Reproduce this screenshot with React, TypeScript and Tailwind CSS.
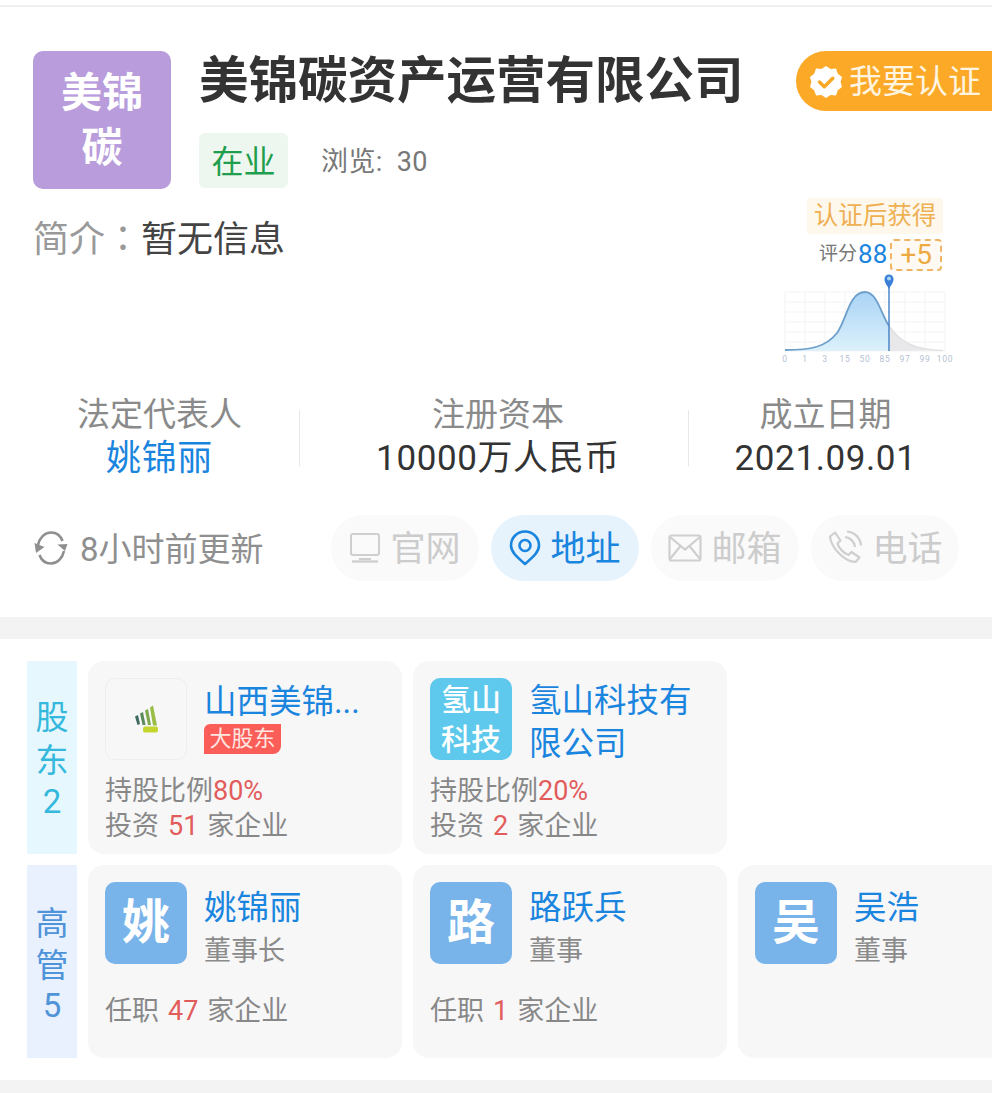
import type { ReactNode } from 'react'

function BadgeIcon() {
  return (
    <svg width="34" height="34" viewBox="0 0 34 34">
      <path d="M17 1l4.600 3 5.400-.4 1.800 5.100 4.200 3.400L31.600 17l1.400 4.900-4.200 3.400-1.800 5.100-5.400-.4L17 33l-4.600-3-5.400.4-1.800-5.100L1 21.900 2.400 17 1 12.100l4.200-3.400L7 3.600l5.400.4z" fill="#fff" />
      <path d="M10.500 17l4.800 4.800 8.500-8.600" fill="none" stroke="#f9a825" strokeWidth="3.400" strokeLinecap="round" strokeLinejoin="round" />
    </svg>
  )
}

function RefreshIcon() {
  return (
    <svg width="36" height="36" viewBox="0 0 36 36" fill="none" stroke="#8f8f8f" strokeWidth="2.600">
      <path d="M5 15C6.500 8 11.500 2.500 18 2.500c5 0 9.500 3 11.500 8.500" />
      <path d="M31 21c-1.500 7-6.500 12.500-13 12.500-5 0-9.500-3-11.500-8.500" />
      <path d="M1.500 13l10 4-8.500 6z" fill="#8f8f8f" stroke="none" />
      <path d="M34.500 14l-10 .5 7.500 6.500z" fill="#8f8f8f" stroke="none" />
    </svg>
  )
}

function LaptopIcon() {
  return (
    <svg width="32" height="32" viewBox="0 0 32 32" fill="none" stroke="#cfcfcf" strokeWidth="2">
      <rect x="2" y="2" width="28" height="21" rx="2" />
      <path d="M3 29.500h26" strokeWidth="2.400" />
      <path d="M10 27h12" strokeWidth="2" />
    </svg>
  )
}

function PinIcon() {
  return (
    <svg width="32" height="36" viewBox="0 0 32 36" fill="none" stroke="#1a85de" strokeWidth="2.600">
      <path d="M16 34C8 27 2 22 2 15.500 2 7.500 8.300 1.500 16 1.500s14 6 14 14C30 22 24 27 16 34z" strokeLinejoin="round" />
      <circle cx="16" cy="15.500" r="5.500" />
    </svg>
  )
}

function MailIcon() {
  return (
    <svg width="34" height="28" viewBox="0 0 34 28" fill="none" stroke="#cfcfcf" strokeWidth="2.200">
      <rect x="1.500" y="1.500" width="31" height="25" rx="2" />
      <path d="M2 3l15 12.500L32 3M2 25l10.500-13M32 25L21.500 12" />
    </svg>
  )
}

function PhoneIcon() {
  return (
    <svg width="36" height="36" viewBox="0 0 36 36" fill="none" stroke="#cfcfcf" strokeWidth="2.200" strokeLinejoin="round">
      <path d="M3 6.500L8 2.500l5.500 8-3 3c1 4.500 6.500 10 11 11.500l3-3 8 5.500-4 4.500C18 32 4 18 3 6.500z" />
      <path d="M18 7c5 .5 9.500 4.500 10 10M20 1.500c7.500.500 13.500 6.500 14 14" />
    </svg>
  )
}

function ScoreChart() {
  const ticks = ['0', '1', '3', '15', '50', '85', '97', '99', '100']
  return (
    <svg width="174" height="95" viewBox="0 0 174 95" className="block">
      <defs>
        <linearGradient id="curve" x1="0" y1="0" x2="0" y2="1">
          <stop offset="0" stopColor="#a9d3f5" />
          <stop offset="1" stopColor="#dcf1fb" />
        </linearGradient>
      </defs>
      <g stroke="#f3f3f3" strokeWidth="1">
        {[21, 31, 41, 51, 61, 71, 80].map((y) => (
          <path key={y} d={`M4 ${y}H164`} />
        ))}
        {[4, 24, 44, 64, 84, 104, 124, 144, 164].map((x) => (
          <path key={x} d={`M${x} 21V80`} />
        ))}
      </g>
      <path d="M108 55C118 70 132 79 162 79.500L108 80z" fill="#e8e8ea" />
      <path d="M4 79C30 79 45 76 56 62 66 48 68 21 84 21 96 21 100 43 108 55V80H4z" fill="url(#curve)" />
      <path d="M4 79C30 79 45 76 56 62 66 48 68 21 84 21 96 21 100 43 108 55" fill="none" stroke="#6d9fcb" strokeWidth="1.800" />
      <path d="M108 55C118 70 132 79 162 79.500" fill="none" stroke="#e0e0e2" strokeWidth="1.400" />
      <path d="M108 14V80" stroke="#3f7fc6" strokeWidth="1.400" />
      <path d="M108 18c-2-4-4.500-6-4.500-10a4.500 4.500 0 0 1 9 0c0 4-2.500 6-4.500 10z" fill="#3b7fd6" />
      <circle cx="108" cy="7.500" r="2" fill="#a9d3f5" />
      {ticks.map((t, i) => (
        <text key={t} x={4 + i * 20} y="91" textAnchor="middle" fontSize="8.500" fill="#b4bfd2" letterSpacing="0.800">
          {t}
        </text>
      ))}
    </svg>
  )
}

function Stat({ label, value, blue }: { label: string; value: string; blue?: boolean }) {
  return (
    <div className="flex flex-col items-center">
      <div className="mt-[-1px] text-[33px] leading-[36px] text-[#8a8a8a]">{label}</div>
      <div className={`mt-[8px] text-[35px] leading-[36px] tracking-[0.6px] ${blue ? 'text-[#1a85de]' : 'text-[#333333]'}`}>{value}</div>
    </div>
  )
}

function Pill({ icon, label, active }: { icon: ReactNode; label: string; active?: boolean }) {
  return (
    <div className={`flex h-[66px] w-[148px] items-center justify-center gap-[9px] rounded-full ${active ? 'bg-[#e6f3fd] text-[#1a85de]' : 'bg-[#fafafa] text-[#cccccc]'}`}>
      {icon}
      <span className="pt-[3px] text-[35px] leading-none">{label}</span>
    </div>
  )
}

function Card({ children, last }: { children: ReactNode; last?: boolean }) {
  return <div className={`h-[193px] w-[314px] shrink-0 rounded-[16px] bg-[#f7f7f8] px-[17px] pt-[17px] ${last ? 'mr-[-60px]' : ''}`}>{children}</div>
}

function Avatar({ text, color, size }: { text: string; color: string; size: string }) {
  return (
    <div className={`flex h-[82px] w-[82px] shrink-0 items-center justify-center rounded-[10px] text-center text-white ${color} ${size}`}>
      {text}
    </div>
  )
}

function Holding({ share, count }: { share: string; count: string }) {
  return (
    <div className="mt-[14px] text-[27px] leading-[35px] text-[#888888]">
      持股比例<span className="text-[#e25c5c]">{share}</span>
      <div>
        投资<span className="mx-[9px] text-[#e25c5c]">{count}</span>家企业
      </div>
    </div>
  )
}

function Manager({ name, title, count, last }: { name: string; title: string; count?: string; last?: boolean }) {
  return (
    <Card last={last}>
      <div className="flex gap-[17px]">
        <Avatar text={name[0]} color="bg-[#78b3ea]" size="font-bold text-[48px]" />
        <div>
          <div className="mt-[4px] text-[32.500px] leading-[44px] text-[#1a85de]">{name}</div>
          <div className="mt-[1px] text-[27px] leading-[40px] text-[#8a8a8a]">{title}</div>
        </div>
      </div>
      {count && (
        <div className="mt-[22px] text-[27px] leading-[36px] text-[#888888]">
          任职<span className="mx-[9px] text-[#e25c5c]">{count}</span>家企业
        </div>
      )}
    </Card>
  )
}

export default function App() {
  return (
    <div className="h-[1093px] w-[992px] overflow-hidden bg-white font-['Roboto','Noto_Sans_CJK_SC',sans-serif]">
      <div className="mt-[5px] h-[2px] bg-[#f0f0f0]" />

      {/* Header */}
      <div className="h-[610px]">
        <div className="flex pt-[44px] pl-[33px]">
          <div className="flex h-[138px] w-[138px] shrink-0 items-center justify-center rounded-[10px] bg-[#b89cdb] px-[24px] pt-[2px] text-center text-[41px] font-bold leading-[55px] text-white">
            美锦碳
          </div>
          <div className="ml-[28px] w-[597px]">
            <h1 className="pt-[2px] text-[49.500px] font-bold leading-[56px] whitespace-nowrap text-[#333333]">美锦碳资产运营有限公司</h1>
            <div className="mt-[24px] flex items-center">
              <span className="flex h-[55px] w-[89px] items-center justify-center rounded-[6px] bg-[#edf7f0] pt-[2px] text-[32px] text-[#1f9e4d]">在业</span>
              <span className="ml-[33px] flex pt-[4px] text-[27px] tracking-[0.4px] text-[#777777]">
                <span className="mr-[14px]">浏览:</span>30
              </span>
            </div>
          </div>
          <div className="flex h-[60px] flex-1 items-center gap-[6px] rounded-l-full bg-[#fba926] pt-[2px] pl-[13px] text-[33px] whitespace-nowrap text-[#fff4e0]">
            <BadgeIcon />
            我要认证
          </div>
        </div>

        <div className="mt-[9px] flex justify-between pr-[37px] pl-[33px]">
          <div className="mt-[16px] text-[36px] leading-[44px]">
            <span className="text-[#999999]">简介</span>
            <span className="font-['Noto_Sans_CJK_TC'] text-[#999999]">：</span>
            <span className="text-[#444444]">暂无信息</span>
          </div>
          <div className="flex w-[174px] flex-col">
            <div className="ml-[26px] flex h-[36px] w-[136px] items-center justify-center rounded-[4px] bg-[#fef7ec] text-[24.500px] whitespace-nowrap text-[#eeb052]">认证后获得</div>
            <div className="mt-[4px] flex h-[33px] items-center pl-[38px]">
              <span className="text-[19px] text-[#777777]">评分</span>
              <span className="ml-[1px] text-[26px] text-[#1a85de]">88</span>
              <span className="ml-[3px] flex h-[32px] w-[52px] items-center justify-center rounded-[4px] border-2 border-dashed border-[#efb565] bg-[#fefaf3] text-[28px] text-[#eeaa42]">+5</span>
            </div>
            <ScoreChart />
          </div>
        </div>

        <div className="mt-[32px] flex items-center">
          <div className="w-[299px] pl-[20px]">
            <Stat label="法定代表人" value="姚锦丽" blue />
          </div>
          <div className="h-[56px] w-px bg-[#e8e8e8]" />
          <div className="w-[388px] pl-[8px]">
            <Stat label="注册资本" value="10000万人民币" />
          </div>
          <div className="h-[56px] w-px bg-[#e8e8e8]" />
          <div className="flex-1 pr-[30px]">
            <Stat label="成立日期" value="2021.09.01" />
          </div>
        </div>

        <div className="mt-[38px] flex items-center pl-[33px]">
          <div className="flex w-[298px] items-center gap-[11px] text-[33px] text-[#8f8f8f]">
            <RefreshIcon />
            <span className="pt-[3px]">8小时前更新</span>
          </div>
          <div className="flex gap-[12px]">
            <Pill icon={<LaptopIcon />} label="官网" />
            <Pill icon={<PinIcon />} label="地址" active />
            <Pill icon={<MailIcon />} label="邮箱" />
            <Pill icon={<PhoneIcon />} label="电话" />
          </div>
        </div>
      </div>

      <div className="h-[22px] bg-[#f3f3f4]" />

      {/* Shareholders and managers */}
      <div className="h-[441px] pt-[22px] pl-[27px]">
        <div className="flex gap-[11px]">
          <div className="flex h-[193px] w-[50px] shrink-0 flex-col items-center justify-center bg-[#e6f7fe] pt-[3px] text-[33px] leading-[43px] text-[#34b8dc]">
            <span>股</span>
            <span>东</span>
            <span className="mt-[-2px]">2</span>
          </div>
          <Card>
            <div className="flex gap-[17px]">
              <div className="flex h-[82px] w-[82px] shrink-0 items-center justify-center rounded-[10px] border border-[#eeeeee]">
                <svg width="24" height="28" viewBox="0 0 24 28">
                  <path d="M1 11.500l3-1.500 2 9-2.500 1z" fill="#3f6b5e" />
                  <path d="M6 8.500l3-1.500 2.500 13H8.500z" fill="#5d8a5a" />
                  <path d="M11 5.500l3-1.500 3 16h-3z" fill="#7ea84e" />
                  <path d="M16 2.500l3-2 4 20h-4z" fill="#99bd45" />
                  <rect x="9" y="21.500" width="15" height="6" rx="2" fill="#c4d62e" />
                </svg>
              </div>
              <div className="min-w-0">
                <div className="mt-[2px] text-[32.500px] leading-[44px] whitespace-nowrap text-[#1a85de]">山西美锦...</div>
                <span className="block h-[30px] w-[77px] rounded-tl-[6px] rounded-br-[8px] bg-[#fb5e58] text-center text-[22px] leading-[30px] text-[#ffe6e0]">大股东</span>
              </div>
            </div>
            <Holding share="80%" count="51" />
          </Card>
          <Card>
            <div className="flex h-[82px] gap-[17px]">
              <Avatar text="氢山科技" color="bg-[#5ec9ec]" size="px-[10px] pt-[2px] text-[30px] font-medium leading-[40px]" />
              <div className="mt-[2px] w-[176px] text-[32.500px] leading-[43px] text-[#1a85de]">氢山科技有限公司</div>
            </div>
            <Holding share="20%" count="2" />
          </Card>
        </div>
        <div className="mt-[11px] flex gap-[11px]">
          <div className="flex h-[193px] w-[50px] shrink-0 flex-col items-center justify-center bg-[#e8f1fd] pt-[7px] text-[33px] leading-[42px] text-[#4f93d9]">
            <span>高</span>
            <span>管</span>
            <span className="mt-[-2px]">5</span>
          </div>
          <Manager name="姚锦丽" title="董事长" count="47" />
          <Manager name="路跃兵" title="董事" count="1" />
          <Manager name="吴浩" title="董事" last />
        </div>
      </div>

      <div className="h-[13px] bg-[#f3f3f4]" />
    </div>
  )
}
